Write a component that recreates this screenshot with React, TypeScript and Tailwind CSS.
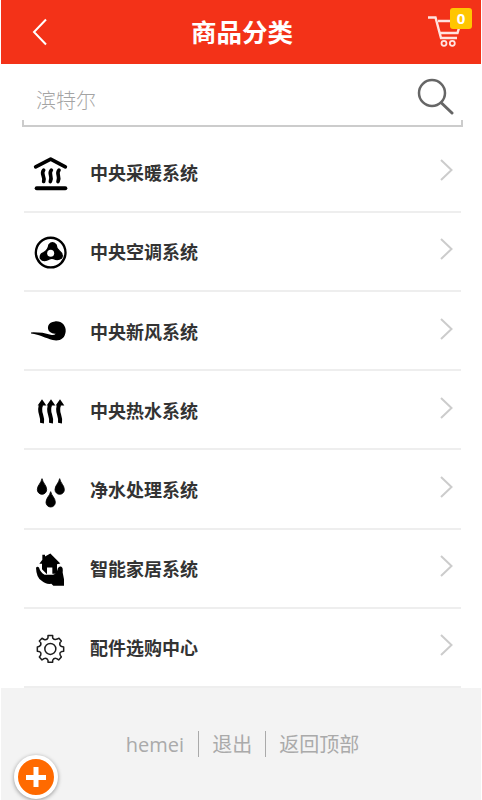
import type { ReactNode } from 'react'

interface Category {
  name: string
  viewBox: string
  icon: ReactNode
}

const CATEGORIES: Category[] = [
  {
    name: '中央采暖系统',
    viewBox: '30 21.6 120 120',
    icon: (
      <g fill="none" stroke="#000" strokeWidth="11" strokeLinecap="round" strokeLinejoin="round">
        <path d="M47 66 L92 43 L136 66" />
        <path d="M50 130 H136" strokeWidth="12" />
        <path d="M71 76 C61 88 76 93 71 110 M94 76 C84 88 99 93 91 110 M117 76 C107 88 122 93 114 110" />
      </g>
    ),
  },
  {
    name: '中央空调系统',
    viewBox: '30 28.2 120 120',
    icon: (
      <>
        <circle cx="92" cy="93" r="44.5" fill="none" stroke="#000" strokeWidth="7" />
        <path
          d="M87 69 Q97 58 108 69 Q109 80 117 87 Q132 99 124 110 Q113 117 101 111 Q92 108 82 115 Q69 121 61 110 Q59 97 71 93 Q84 87 87 69 Z"
          stroke="#000"
          strokeWidth="4"
          strokeLinejoin="round"
        />
        <circle cx="92" cy="95" r="10.5" fill="#fff" />
      </>
    ),
  },
  {
    name: '中央新风系统',
    viewBox: '30 31.8 120 120',
    icon: <path d="M33 96 Q66 95 92 103 Q102 106 107 100 Q97 101 90 95 C78 84 84 64 105 63 C125 61 139 76 137 94 C134 116 119 123 98 119 C76 112 60 103 33 99 Z" />,
  },
  {
    name: '中央热水系统',
    viewBox: '30 29.4 120 120',
    icon: (
      <>
        <path d="M66 57 L79 76 H53 Z M93 57 L106 76 H80 Z M120 57 L133 76 H107 Z" />
        <path
          d="M64 73 C52 96 71 105 66 129 M91 73 C79 96 98 105 93 129 M118 73 C106 96 125 105 120 129"
          fill="none"
          stroke="#000"
          strokeWidth="12"
        />
      </>
    ),
  },
  {
    name: '净水处理系统',
    viewBox: '30 27 120 120',
    icon: (
      <path
        d="M66 56 C69 70 80 76 80 89 A14 14 0 0 1 52 89 C52 76 63 70 66 56 Z M119 56 C122 70 133 76 133 89 A14 14 0 0 1 105 89 C105 76 116 70 119 56 Z M92 95 C95 108 106 114 106 127 A14 14 0 0 1 78 127 C78 114 89 108 92 95 Z"
        stroke="#000"
        strokeWidth="2.5"
      />
    ),
  },
  {
    name: '智能家居系统',
    viewBox: '30 24.6 120 120',
    icon: (
      <>
        <path d="M58 72 L67 60 V45 H75 V50 L91 41 L121 71 L111 73 V102 H97 V83 H81 V103 L66 88 V72 Z" />
        <path d="M48 84 Q52 78 57 83 Q61 98 74 105 H99 Q107 103 112 91 Q114 79 123 80 Q130 82 128 98 L132 118 V138 H100 L94 132 Q76 134 65 123 Q49 114 48 84 Z" />
      </>
    ),
  },
  {
    name: '配件选购中心',
    viewBox: '30 22.2 120 120',
    icon: (
      <g fill="none" stroke="#1c1c1c" strokeWidth="4.5" strokeLinejoin="round">
        <circle cx="91" cy="88" r="16.5" />
        <path d="M84 48 H98 V55 Q104 63 112 58 L117 56 L124 64 L120 69 Q117 78 125 81 L131 82 V95 L125 96 Q117 99 121 107 L124 112 L116 121 L110 117 Q102 114 98 122 V128 H84 V122 Q80 114 72 117 L66 121 L58 112 L62 107 Q65 98 57 96 L52 95 V82 L57 81 Q65 77 62 69 L58 64 L66 56 L71 59 Q80 63 84 55 Z" />
      </g>
    ),
  },
]

function Header() {
  return (
    <header className="relative flex h-16 items-center justify-center bg-[#f33218]">
      <svg className="absolute left-[31px] top-[18px]" width="16" height="28" fill="none" stroke="#fff" strokeWidth="2">
        <path d="M14 1.5 L2 14 L14 26.5" />
      </svg>
      <h1 className="pl-0.5 pt-0.5 text-[25.5px] font-bold leading-none text-white">商品分类</h1>
      <svg className="absolute left-[426px] top-[14px]" width="36" height="34" fill="none" stroke="#ffe3df" strokeWidth="2.4">
        <path d="M1 3.5 H8.5 L14 24 H30 M11 7 H34 L30.5 19 H12.5" />
        <circle cx="17" cy="29.3" r="2.5" strokeWidth="1.8" />
        <circle cx="25.3" cy="29.3" r="2.5" strokeWidth="1.8" />
      </svg>
      <span className="absolute left-[449px] top-2 flex h-[21px] w-[22px] items-center justify-center rounded-[3px] bg-[#ffc600] pb-px font-['Open_Sans'] text-[15px] font-bold leading-none text-white">
        0
      </span>
    </header>
  )
}

function SearchBar() {
  return (
    <div className="ml-[21px] mr-[18px] flex h-[63px] flex-col justify-end">
      <div className="flex flex-1 justify-between pl-3.5 pr-[9px]">
        <span className="pt-[21px] font-['Noto_Sans_CJK_SC',sans-serif] text-[20px] font-light leading-[30px] text-[#a4a4a4]">滨特尔</span>
        <svg className="mt-[14px]" width="38" height="40" fill="none" stroke="#666" strokeWidth="2.5" strokeLinecap="round">
          <circle cx="16" cy="15" r="13" />
          <path d="M25.5 25 L36 35" strokeWidth="3" />
        </svg>
      </div>
      <div className="h-[7px] border-x-2 border-b-2 border-[#ccc]" />
    </div>
  )
}

export default function App() {
  return (
    <div className="relative mx-auto flex h-[800px] w-[480px] flex-col overflow-hidden bg-white font-['Open_Sans','Noto_Sans_CJK_SC',sans-serif]">
      <Header />
      <SearchBar />

      <ul className="mx-[23px] mr-5 mt-[6.6px]">
        {CATEGORIES.map((c) => (
          <li key={c.name} className="flex h-[79.2px] items-center border-b-2 border-[#eee]">
            <svg className="ml-1.5 shrink-0" width="40" height="40" viewBox={c.viewBox}>
              {c.icon}
            </svg>
            <span className="ml-5 pt-0.5 text-[18px] font-bold leading-[26px] text-[#333]">{c.name}</span>
            <svg className="mb-1 ml-auto mr-[7px]" width="14" height="22" fill="none" stroke="#ccc" strokeWidth="2">
              <path d="M1 1 L11.5 11 L1 21" />
            </svg>
          </li>
        ))}
      </ul>

      <footer className="flex-1 bg-[#f3f3f3] pt-[43px]">
        <div className="flex items-start justify-center pl-[3px] text-[20px] leading-[26px] text-[#aaa]">
          <a className="pl-[13px] pr-3.5 pt-px">hemei</a>
          <a className="h-[26px] border-x border-[#aaa] px-[13px] pt-px">退出</a>
          <a className="px-[13px] pt-px">返回顶部</a>
        </div>
      </footer>

      <button className="absolute left-[13px] top-[755px] flex size-11 items-center justify-center rounded-full border-4 border-white bg-[#ff6a00] shadow-[0_1px_4px_rgba(0,0,0,0.4)]">
        <svg width="22" height="22" stroke="#fff" strokeWidth="5">
          <path d="M11 1 V21 M1 11.5 H21" />
        </svg>
      </button>
    </div>
  )
}
